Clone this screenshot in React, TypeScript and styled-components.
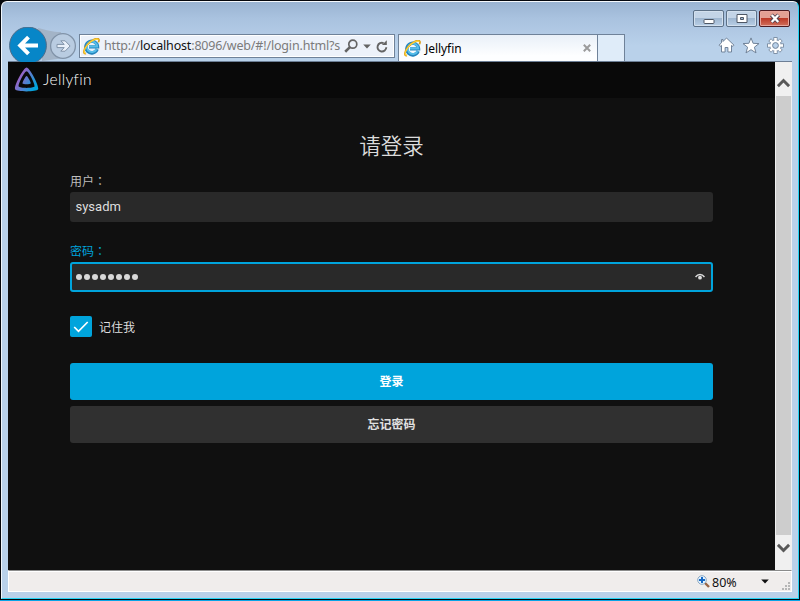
import React from "react";
import styled, { createGlobalStyle, css } from "styled-components";

const GlobalStyle = createGlobalStyle`
  * { box-sizing: border-box; }
  body {
    margin: 0;
    overflow: hidden;
    background: #06101f;
    font-family: "Noto Sans", "Noto Sans CJK SC", sans-serif;
  }
  svg { display: block; flex: none; }
`;

const Desktop = styled.div`
  width: 800px;
  height: 601px;
  padding: 1px 1px 2px 1px;
  background: linear-gradient(90deg, #05070c 0 60%, #030b16);
  border-bottom: 1px solid #0aa4e6;
`;

const Window = styled.div`
  display: flex;
  flex-direction: column;
  height: 598px;
  border: 1px solid;
  border-color: #f5f9fd #25d4f5 #25d4f5 #f0f6fc;
  border-radius: 6px 6px 0 0;
  padding: 0 6px 6px 6px;
  background: linear-gradient(180deg, #9ab4d2 0, #a9c2df 16px, #b9d1ea 44px, #b9d1ea 100%);
`;

const TitleBar = styled.div`
  display: flex;
  justify-content: flex-end;
  gap: 2px;
  height: 25px;
  padding: 8px 2px 0 0;
  flex: none;
`;

const CaptionButton = styled.button<{ $close?: boolean }>`
  display: flex;
  align-items: center;
  justify-content: center;
  width: 31px;
  height: 17px;
  padding: 0;
  border: 1px solid ${(p) => (p.$close ? "#4c1a20" : "#5c7087")};
  border-radius: 2px;
  box-shadow: inset 0 0 0 1px ${(p) => (p.$close ? "#e8a69d" : "#d3e0ee")};
  background: ${(p) =>
    p.$close
      ? "linear-gradient(180deg, #e3a094 0 45%, #bd3a28 50%, #d0705c 100%)"
      : "linear-gradient(180deg, #c3d4e7 0 45%, #9fb7d1 50%, #b9cfe6 100%)"};
`;

const NavBar = styled.div`
  display: flex;
  height: 35px;
  flex: none;
  border-bottom: 1px solid #6d7f96;
`;

const Travel = styled.div`
  width: 71px;
  height: 35px;
  overflow: hidden;
  flex: none;
`;

const AddressBar = styled.div`
  display: flex;
  align-items: center;
  width: 316px;
  height: 24px;
  margin-top: 7px;
  padding-left: 3px;
  border: 1px solid #6f8299;
  box-shadow: inset 0 0 0 1px #fff;
  background: #edf2fa;
  flex: none;
`;

const Url = styled.div`
  width: 237px;
  margin-left: 4px;
  white-space: nowrap;
  font-size: 12.5px;
  line-height: 20px;
  letter-spacing: -0.17px;
  color: #7b7b7b;
  b { font-weight: 400; color: #111; }
`;

const AddressTools = styled.div`
  display: flex;
  align-items: center;
  gap: 5px;
  margin-left: 3px;
`;

const Tab = styled.div`
  display: flex;
  align-items: center;
  width: 200px;
  height: 27px;
  margin: 7px 0 0 3px;
  padding: 0 6px 0 5px;
  border: 1px solid #6f8299;
  border-bottom: 0;
  background: linear-gradient(180deg, #e9f0f8, #fdfeff 80%);
  font-size: 12px;
  color: #000;
  flex: none;
  span { flex: 1; margin-left: 4px; letter-spacing: -0.05px; }
`;

const NewTab = styled.div`
  width: 27px;
  height: 27px;
  margin-top: 7px;
  border: 1px solid #6f8299;
  border-left: 0;
  border-bottom: 0;
  background: #dfecf9;
  flex: none;
`;

const Commands = styled.div`
  display: flex;
  gap: 7px;
  margin: 10px 8px 0 auto;
`;

const Viewport = styled.div`
  display: flex;
  height: 508px;
  flex: none;
`;

const Page = styled.div`
  width: 767px;
  background: #101010;
`;

const SiteHeader = styled.header`
  display: flex;
  align-items: center;
  height: 36px;
  padding: 0 0 1px 6px;
  background: #090909;
`;

const Brand = styled.span`
  margin: -1px 0 0 4px;
  font: 300 15.5px/20px Lato, sans-serif;
  letter-spacing: 0.35px;
  color: #fff;
`;

const Form = styled.form`
  display: flex;
  flex-direction: column;
  width: 643px;
  margin-left: 62px;
  padding-top: 31px;
  font-family: Roboto, "Noto Sans CJK SC", sans-serif;
`;

const Title = styled.h1`
  height: 31px;
  margin: 0 0 12px;
  font: 350 21.5px/31px "Noto Sans CJK SC", sans-serif;
  text-align: center;
  color: #dcdcdc;
`;

const Label = styled.label<{ $active?: boolean }>`
  height: 20px;
  font: 400 12px/18px "Noto Sans CJK SC", sans-serif;
  color: ${(p) => (p.$active ? "#00a4dc" : "#bdbdbd")};
`;

const Colon = styled.span`
  font-family: "Noto Sans CJK TC", sans-serif;
`;

const Field = styled.div<{ $active?: boolean }>`
  display: flex;
  align-items: center;
  justify-content: space-between;
  height: 30px;
  margin-bottom: ${(p) => (p.$active ? 24 : 20)}px;
  padding: ${(p) => (p.$active ? "0 6px 0 4px" : "0 6px 1px 3.5px")};
  border: 2px solid ${(p) => (p.$active ? "#00a4dc" : "#292929")};
  border-radius: 3px;
  background: #292929;
  font-size: 13px;
  color: #dedede;
`;

const Dots = styled.div`
  display: flex;
  gap: 2px;
`;

const Dot = styled.i`
  width: 6px;
  height: 6px;
  border-radius: 50%;
  background: #d8d8d8;
`;

const Remember = styled.label`
  display: flex;
  align-items: center;
  height: 21px;
  margin-bottom: 26px;
  font: 400 12px/20px "Noto Sans CJK SC", sans-serif;
  color: #dedede;
`;

const CheckBox = styled.span`
  display: flex;
  align-items: center;
  justify-content: center;
  width: 22px;
  height: 21px;
  margin-right: 7px;
  border-radius: 2px;
  background: #00a4dc;
`;

const Action = styled.button<{ $primary?: boolean }>`
  height: 37px;
  margin: 0 0 6px;
  padding: 0 0 1px;
  border: 0;
  border-radius: 3px;
  background: #303030;
  font: 700 12px/20px "Noto Sans CJK SC", sans-serif;
  color: #e0e0e0;
  ${(p) => p.$primary && css`
    background: #00a4dc;
    color: #fff;
  `}
`;

const ScrollBar = styled.div`
  display: flex;
  flex-direction: column;
  align-items: center;
  justify-content: space-between;
  width: 17px;
  padding: 16px 1px 17px;
  background: #f0f0f0;
`;

const Thumb = styled.div`
  width: 15px;
  height: 439px;
  background: #cdcdcd;
`;

const StatusBar = styled.div`
  display: flex;
  align-items: center;
  justify-content: flex-end;
  height: 22px;
  border: 1px solid #fff;
  border-top-color: #8b8b8b;
  box-shadow: inset 0 1px 0 #fff;
  background: #f0edec;
  font-size: 12.5px;
  color: #111;
  flex: none;
`;

const Zoom = styled.span`
  width: 49px;
  margin-left: 2px;
  padding-top: 2px;
`;

const BrowserLogo = () => (
  <svg width="17" height="17" viewBox="0 0 17 17" fill="none">
    <path d="M14.2 11.2A5.9 5.9 0 1 1 14.6 8.9H6" stroke="#2585bd" strokeWidth="3.3" />
    <path d="M13.5 11.2A5.2 5.2 0 1 1 14.1 8.6H6" stroke="#56bde9" strokeWidth="2" />
    <path d="M3 15.4C-.2 16.4.2 11.6 4 7 8 1.9 14.3-.7 15.8 1.4c.5.8.1 1.8-.5 2.8" stroke="#d99d18" strokeWidth="1.7" />
    <path d="M3 15.1C.1 15.8.8 11.4 4.3 7 8 2.4 13.9 0 15.4 1.7" stroke="#ffd63c" strokeWidth="1.1" />
  </svg>
);

const TravelButtons = () => (
  <svg width="71" height="35" viewBox="0 0 71 35" fill="none">
    <path d="M30 1C39 3 44 5 53 5L57 31 34 34Z" fill="#a3b4c7" />
    <circle cx="55" cy="19" r="12.4" fill="#b9cce1" stroke="#8193a8" strokeWidth="1.3" />
    <path d="M49 17.4h7.2l-3.4-3.6h4.3l5 5.2-5 5.2h-4.3l3.4-3.6H49Z" fill="#e8f0f9" stroke="#8193a8" />
    <circle cx="20" cy="18.5" r="18.4" fill="#0786c8" stroke="#4e6c89" />
    <path d="M30 18.5H13M20.5 10.2l-8.3 8.3 8.3 8.3" stroke="#fff" strokeWidth="4" />
  </svg>
);

const CaptionGlyph = ({ kind }: { kind: "min" | "max" | "close" }) => (
  <svg width="12" height="11" viewBox="0 0 12 11" fill="none">
    {kind === "min" && <rect x="1" y="6.5" width="10" height="4" rx=".8" fill="#fff" stroke="#4e5765" />}
    {kind === "max" && <path fillRule="evenodd" d="M1 1.5h10v8H1ZM4.5 4.5v2h3v-2Z" fill="#fff" stroke="#4e5765" />}
    {kind === "close" && (
      <>
        <path d="m2.4 2 7.2 7m0-7L2.4 9" stroke="#51424f" strokeWidth="4" />
        <path d="m2.7 2 6.6 7m0-7L2.7 9" stroke="#fff" strokeWidth="2.3" />
      </>
    )}
  </svg>
);

const SearchGlyph = () => (
  <svg width="14" height="14" viewBox="0 0 14 14" fill="none" stroke="#646464">
    <circle cx="8.8" cy="5.2" r="4" strokeWidth="1.7" />
    <path d="M5.9 8.1 1.2 12.7" strokeWidth="2.6" />
  </svg>
);

const Caret = ({ dark }: { dark?: boolean }) => (
  <svg width="8" height="5" viewBox="0 0 8 5"><path d="M.2.5h7.6L4 4.6Z" fill={dark ? "#111" : "#646464"} /></svg>
);

const RefreshGlyph = () => (
  <svg width="12" height="13" viewBox="0 0 12 13" fill="none">
    <path d="M10.3 7.3A4.4 4.4 0 1 1 7.6 3.1" stroke="#646464" strokeWidth="1.9" />
    <path d="M10.8.2v4.9H5.9Z" fill="#646464" />
  </svg>
);

const CommandGlyphs = () => (
  <Commands>
    <svg width="17" height="17" viewBox="0 0 17 17"><path d="M8.5 1 16 8.2l-1.1 1.2-1.4-1V15H9.9v-4.5H7.1V15H3.5V8.4l-1.4 1L1 8.2 3.5 5.8V2.5H5v2Z" fill="#fff" stroke="#718399" /></svg>
    <svg width="18" height="17" viewBox="0 0 18 17"><path d="m9 .9 2.1 5.4 5.9.3-4.6 3.6 1.6 5.7L9 12.7l-5 3.2 1.6-5.7L1 6.6l5.9-.3Z" fill="#fff" stroke="#718399" /></svg>
    <svg width="17" height="17" viewBox="0 0 17 17">
      {[0, 45, 90, 135, 180, 225, 270, 315].map((a) => (
        <rect key={a} x="6.9" y=".6" width="3.2" height="4" fill="#fff" stroke="#718399" strokeWidth=".9" transform={`rotate(${a} 8.5 8.5)`} />
      ))}
      <circle cx="8.5" cy="8.5" r="5.6" fill="#fff" stroke="#718399" strokeWidth=".7" />
      {[0, 45, 90, 135, 180, 225, 270, 315].map((a) => (
        <rect key={a} x="7.4" y="1.1" width="2.2" height="3.6" fill="#fff" transform={`rotate(${a} 8.5 8.5)`} />
      ))}
      <circle cx="8.5" cy="8.5" r="2.9" fill="#b9d1ea" stroke="#718399" />
    </svg>
  </Commands>
);

const JellyfinLogo = () => (
  <svg width="25" height="25" viewBox="0 0 25 25">
    <defs>
      <linearGradient id="brand" x1="4" y1="8" x2="22" y2="19" gradientUnits="userSpaceOnUse">
        <stop stopColor="#aa5cc3" /><stop offset="1" stopColor="#00a4dc" />
      </linearGradient>
    </defs>
    <path fill="url(#brand)" d="M12.6 8.9c-1 0-4.6 6.7-4.1 7.6.6 1 7.6 1 8.2 0 .5-.9-3.1-7.6-4.1-7.6Z" />
    <path fill="url(#brand)" fillRule="evenodd" d="M12.6.6C9.4.6-.3 19.4 1.1 22.3c1.4 2.8 21.6 2.8 23 0C25.5 19.4 15.8.6 12.6.6Zm7.9 19c-1 1.8-14.8 1.8-15.8 0-.9-1.8 5.7-15.3 7.9-15.3s8.8 13.5 7.9 15.3Z" />
  </svg>
);

const RevealGlyph = () => (
  <svg width="10" height="8" viewBox="0 0 10 8" fill="none">
    <path d="M.5 4C3 .8 7 .8 9.5 4" stroke="#ddd" strokeWidth="1.5" />
    <circle cx="5" cy="4.7" r="1.9" fill="#ddd" />
  </svg>
);

const ScrollArrow = ({ down }: { down?: boolean }) => (
  <svg width="13" height="10" viewBox="0 0 13 10" fill="none">
    <path d={down ? "m.9 1.8 5.6 5.7 5.6-5.7" : "m.9 8.2 5.6-5.7 5.6 5.7"} stroke="#585858" strokeWidth="2.9" />
  </svg>
);

const ZoomGlyph = () => (
  <svg width="13" height="13" viewBox="0 0 13 13" fill="none">
    <path d="m8 8 4 4" stroke="#9a6544" strokeWidth="2.4" />
    <circle cx="5" cy="5" r="4.3" fill="#e5f3ff" stroke="#8ba7c1" />
    <path d="M5 2v6M2 5h6" stroke="#1769c4" strokeWidth="2" />
  </svg>
);

const Grip = () => (
  <svg width="9" height="9" viewBox="0 0 9 9" fill="#b6b6b6">
    {[[6, 0], [3, 3], [6, 3], [0, 6], [3, 6], [6, 6]].map(([x, y]) => <rect key={`${x}${y}`} x={x} y={y} width="2" height="2" />)}
  </svg>
);

const GripSlot = styled.div`
  align-self: flex-end;
  margin-left: 13px;
`;

export default function App() {
  return (
    <Desktop>
      <GlobalStyle />
      <Window>
        <TitleBar>
          <CaptionButton><CaptionGlyph kind="min" /></CaptionButton>
          <CaptionButton><CaptionGlyph kind="max" /></CaptionButton>
          <CaptionButton $close><CaptionGlyph kind="close" /></CaptionButton>
        </TitleBar>
        <NavBar>
          <Travel><TravelButtons /></Travel>
          <AddressBar>
            <BrowserLogo />
            <Url>http://<b>localhost</b>:8096/web/#!/login.html?s</Url>
            <AddressTools><SearchGlyph /><Caret /><RefreshGlyph /></AddressTools>
          </AddressBar>
          <Tab>
            <BrowserLogo />
            <span>Jellyfin</span>
            <svg width="8" height="8" viewBox="0 0 8 8"><path d="m.8.8 6.4 6.4m0-6.4L.8 7.2" stroke="#9b9b9b" strokeWidth="2" /></svg>
          </Tab>
          <NewTab />
          <CommandGlyphs />
        </NavBar>
        <Viewport>
          <Page>
            <SiteHeader><JellyfinLogo /><Brand>Jellyfin</Brand></SiteHeader>
            <Form>
              <Title>请登录</Title>
              <Label>用户<Colon>：</Colon></Label>
              <Field>sysadm</Field>
              <Label $active>密码<Colon>：</Colon></Label>
              <Field $active>
                <Dots>{Array.from({ length: 8 }, (_, i) => <Dot key={i} />)}</Dots>
                <RevealGlyph />
              </Field>
              <Remember>
                <CheckBox>
                  <svg width="16" height="12" viewBox="0 0 16 12" fill="none"><path d="m1.2 6 4.3 4.3L14.7 1" stroke="#fff" strokeWidth="1.7" /></svg>
                </CheckBox>
                记住我
              </Remember>
              <Action type="button" $primary>登录</Action>
              <Action type="button">忘记密码</Action>
            </Form>
          </Page>
          <ScrollBar><ScrollArrow /><Thumb /><ScrollArrow down /></ScrollBar>
        </Viewport>
        <StatusBar>
          <ZoomGlyph /><Zoom>80%</Zoom><Caret dark /><GripSlot><Grip /></GripSlot>
        </StatusBar>
      </Window>
    </Desktop>
  );
}
